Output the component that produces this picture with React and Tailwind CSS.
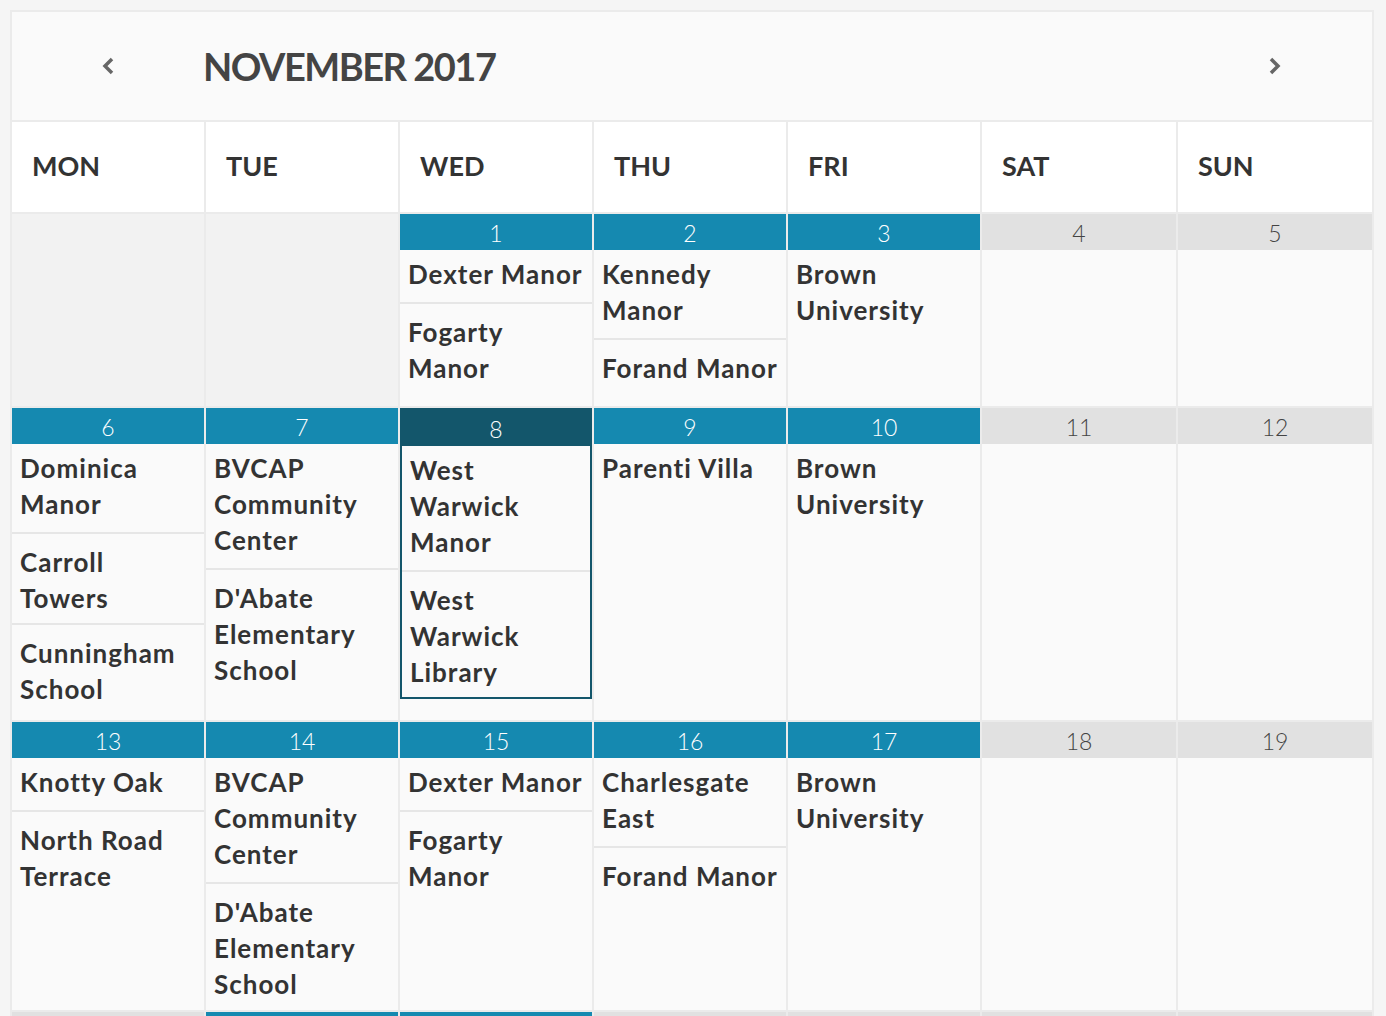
import React from 'react';

const weeks = [
    [
        null,
        null,
        { day: 1, events: ['Dexter Manor', 'Fogarty Manor'] },
        { day: 2, events: ['Kennedy Manor', 'Forand Manor'] },
        { day: 3, events: ['Brown University'] },
        { day: 4, events: [] },
        { day: 5, events: [] },
    ],
    [
        { day: 6, events: ['Dominica Manor', 'Carroll Towers', 'Cunningham School'] },
        { day: 7, events: ['BVCAP Community Center', "D'Abate Elementary School"] },
        { day: 8, events: ['West Warwick Manor', 'West Warwick Library'], selected: true },
        { day: 9, events: ['Parenti Villa'] },
        { day: 10, events: ['Brown University'] },
        { day: 11, events: [] },
        { day: 12, events: [] },
    ],
    [
        { day: 13, events: ['Knotty Oak', 'North Road Terrace'] },
        { day: 14, events: ['BVCAP Community Center', "D'Abate Elementary School"] },
        { day: 15, events: ['Dexter Manor', 'Fogarty Manor'] },
        { day: 16, events: ['Charlesgate East', 'Forand Manor'] },
        { day: 17, events: ['Brown University'] },
        { day: 18, events: [] },
        { day: 19, events: [] },
    ],
    [
        { day: 20, events: [] },
        { day: 21, events: ['BVCAP Community Center', "D'Abate Elementary School"] },
        { day: 22, events: ['Dexter Manor', 'Fogarty Manor'] },
        { day: 23, events: [] },
        { day: 24, events: [] },
        { day: 25, events: [] },
        { day: 26, events: [] },
    ],
    [
        { day: 27, events: ['Dominica Manor', 'Carroll Towers'] },
        { day: 28, events: ['BVCAP Community Center'] },
        { day: 29, events: ['West Warwick Manor'] },
        { day: 30, events: ['Parenti Villa'] },
        null,
        null,
        null,
    ],
];

const dayNames = ['MON', 'TUE', 'WED', 'THU', 'FRI', 'SAT', 'SUN'];

function Chevron({ dir }) {
    return (
        <svg width="14" height="20" viewBox="0 0 14 20" fill="none">
            <polyline
                points={dir === 'left' ? '11,3 4,10 11,17' : '3,3 10,10 3,17'}
                stroke="#666"
                strokeWidth="3.5"
            />
        </svg>
    );
}

function DayCell({ cell }) {
    if (!cell) return <div className="bg-[#f2f2f2]" />;

    const hasEvents = cell.events.length > 0;
    const barColor = cell.selected
        ? 'bg-[#13566b] text-white'
        : hasEvents
        ? 'bg-[#1589b0] text-white'
        : 'bg-[#e1e1e1] text-[#444]';

    return (
        <div className="bg-[#fafafa]">
            <div className={cell.selected ? 'border-2 border-[#13566b]' : ''}>
                <div className={`h-[36px] pt-[3px] flex items-center justify-center text-[23px] font-light ${barColor}`}>
                    {cell.day}
                </div>
                {cell.events.map((ev, i) => (
                    <div
                        key={i}
                        className={`px-2 text-[26px] leading-[36px] font-bold tracking-[1px] text-[#333] ${i > 0 ? 'pt-[10px] pb-[7px] border-t-2 border-[#e6e6e6]' : 'pt-[6px] pb-[10px]'}`}
                    >
                        {ev}
                    </div>
                ))}
            </div>
        </div>
    );
}

export default function App() {
    return (
        <div className="min-h-screen bg-[#f5f5f5] pt-[10px] font-['Lato',sans-serif]">
            <div className="ml-[10px] w-[1364px] border-2 border-[#ebebeb] bg-[#ebebeb]">
                {/* month header */}
                <div className="grid grid-cols-[192px_192px_192px_192px_192px_194px_194px] gap-x-[2px] h-[110px] items-center bg-[#fafafa] border-b-2 border-[#ebebeb]">
                    <div className="flex justify-center">
                        <Chevron dir="left" />
                    </div>
                    <div className="col-span-5 -ml-[3px] text-[38px] font-bold text-[#444] tracking-[-1.5px]">
                        NOVEMBER 2017
                    </div>
                    <div className="flex justify-center">
                        <Chevron dir="right" />
                    </div>
                </div>

                <div className="grid grid-cols-[192px_192px_192px_192px_192px_194px_194px] grid-rows-[90px_192px_312px_288px_auto_auto] gap-[2px]">
                    {dayNames.map((d) => (
                        <div key={d} className="bg-white flex items-center pl-5 pb-[2px] text-[27px] font-bold text-[#333]">
                            {d}
                        </div>
                    ))}
                    {weeks.map((week, wi) =>
                        week.map((cell, ci) => <DayCell key={`${wi}-${ci}`} cell={cell} />)
                    )}
                </div>
            </div>
        </div>
    );
}
